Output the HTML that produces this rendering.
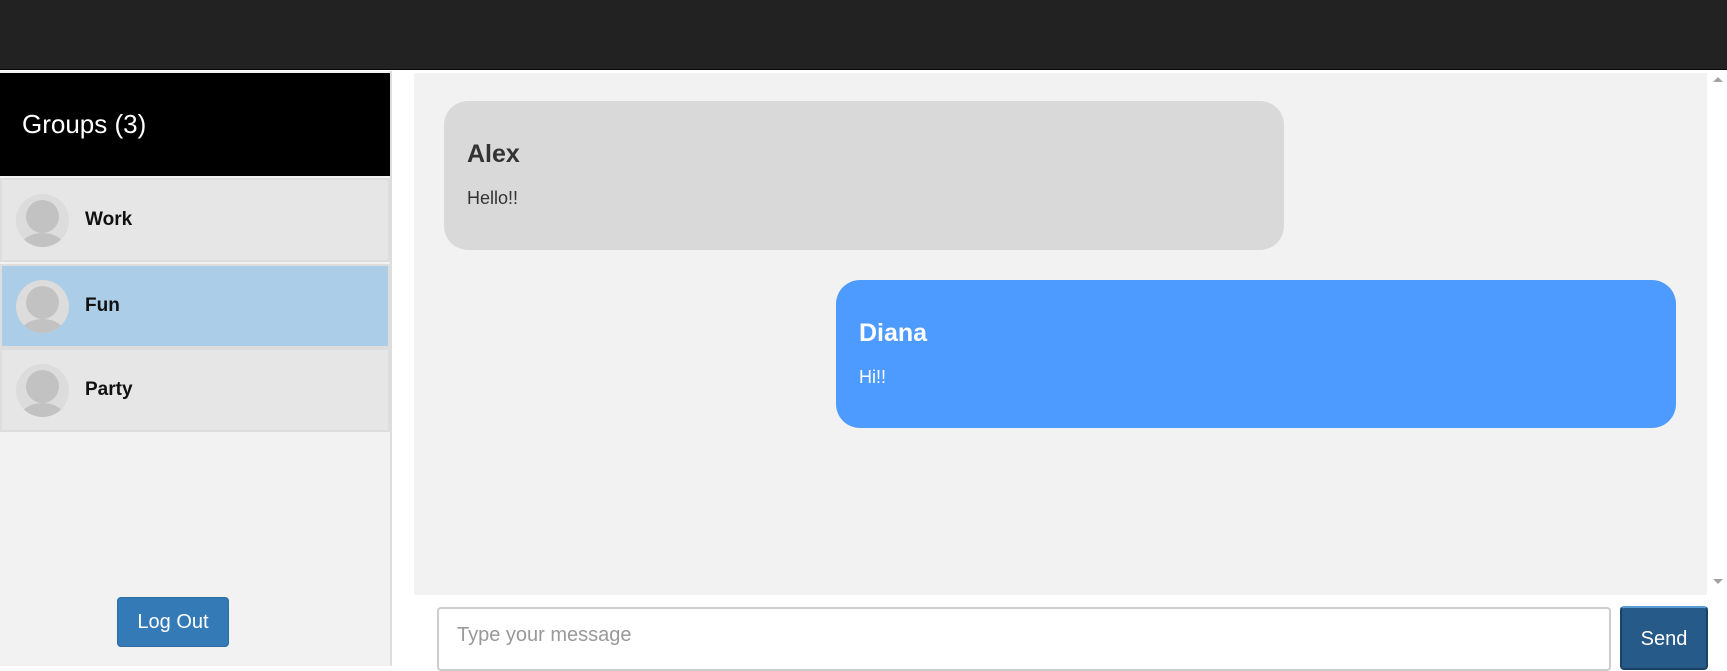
<!DOCTYPE html>
<html><head><style>
*{box-sizing:border-box;margin:0;padding:0}
body{width:1727px;height:666px;overflow:hidden;background:#fff;font-family:"Liberation Sans",Arial,sans-serif;position:relative}
.top{position:absolute;left:0;top:0;width:1727px;height:70px;background:#222;border-bottom:1px solid #080808}
.side{position:absolute;left:0;top:71px;width:392px;height:595px;background:#f2f2f2;border-right:2px solid #ddd}
.hdr{position:absolute;left:0;top:2px;width:390px;height:103px;background:#000;color:#fff;font-size:26px;padding:36px 0 0 22px}
.item{position:absolute;left:0;width:390px;height:84px;background:#e6e6e6;border:2px solid #ddd}
.item.sel{background:#abcde8}
.av{position:absolute;left:14px;top:14px;width:53px;height:53px;border-radius:50%;background:#dcdcdc;overflow:hidden}
.av:before{content:"";position:absolute;left:10px;top:6px;width:33px;height:33px;border-radius:50%;background:#c2c2c2}
.av:after{content:"";position:absolute;left:4px;top:39px;width:45px;height:30px;border-radius:50%;background:#c2c2c2}
.item span{position:absolute;left:83px;top:29px;font-weight:bold;font-size:19px;color:#111}
.logout{position:absolute;left:117px;top:597px;width:112px;height:50px;background:#337ab7;border:1px solid #2e6da4;border-radius:4px;color:#fff;font-size:20px;text-align:center;line-height:48px}
.chat{position:absolute;left:414px;top:73px;width:1293px;height:522px;background:#f2f2f2}
.sb{position:absolute;left:1707px;top:71px;width:20px;height:524px;background:#fff}
.bub{position:absolute;border-radius:24px;padding:0 23px}
.bub b{display:block;font-size:25px;margin-top:39px}
.bub p{font-size:18px;margin-top:19px}
.input{position:absolute;left:437px;top:607px;width:1174px;height:64px;border:2px solid #ccc;border-radius:4px;background:#fff;color:#999;font-size:20px;padding:15px 18px}
.send{position:absolute;left:1620px;top:606px;width:88px;height:64px;background:#265a88;border:2px solid #1b4266;border-top-color:#5b9bd5;border-radius:4px;color:#fff;font-size:20px;text-align:center;padding-top:20px}
</style></head><body>
<div class="top"></div>
<div class="side">
<div class="hdr">Groups (3)</div>
<div class="item" style="top:107px"><div class="av"></div><span>Work</span></div>
<div class="item sel" style="top:193px"><div class="av"></div><span>Fun</span></div>
<div class="item" style="top:277px"><div class="av"></div><span>Party</span></div>
</div>
<div class="logout">Log Out</div>
<div class="chat">
<div class="bub" style="left:30px;top:28px;width:840px;height:149px;background:#d9d9d9;color:#333"><b>Alex</b><p>Hello!!</p></div>
<div class="bub" style="left:422px;top:207px;width:840px;height:148px;background:#4d9bff;color:#fff"><b>Diana</b><p>Hi!!</p></div>
</div>
<div class="sb"><div style="position:absolute;left:6px;top:6px;border:5px solid transparent;border-bottom-color:#a3a3a3;border-top:0"></div><div style="position:absolute;left:6px;top:508px;border:5px solid transparent;border-top-color:#a3a3a3;border-bottom:0"></div></div>
<div class="input">Type your message</div>
<div class="send">Send</div>
</body></html>
